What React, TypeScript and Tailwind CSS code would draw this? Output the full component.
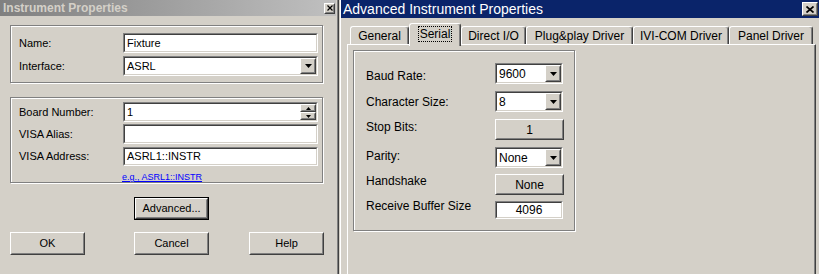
import React from "react";

type P = { className?: string; inner?: string; children?: React.ReactNode };

function Raised({ className = "", inner = "", children }: P) {
  return (
    <div className={`border border-t-white border-l-white border-r-[#404040] border-b-[#404040] bg-[#d4d0c8] ${className}`}>
      <div className={`w-full h-full border border-t-[#d4d0c8] border-l-[#d4d0c8] border-r-[#808080] border-b-[#808080] flex items-center justify-center ${inner}`}>
        {children}
      </div>
    </div>
  );
}

function Sunken({ className = "", inner = "", children }: P) {
  return (
    <div className={`border border-t-[#808080] border-l-[#808080] border-r-white border-b-white ${className}`}>
      <div className={`w-full h-full border border-t-[#404040] border-l-[#404040] border-r-[#d4d0c8] border-b-[#d4d0c8] bg-white flex items-center ${inner}`}>
        {children}
      </div>
    </div>
  );
}

function DownArrow() {
  return (
    <svg width="7" height="4" viewBox="0 0 7 4">
      <path d="M0 0H7L3.5 4Z" fill="#000" />
    </svg>
  );
}

function TinyArrow({ up }: { up?: boolean }) {
  return (
    <svg width="5" height="3" viewBox="0 0 5 3">
      <path d={up ? "M0 3H5L2.5 0Z" : "M0 0H5L2.5 3Z"} fill="#000" />
    </svg>
  );
}

function XIcon({ big }: { big?: boolean }) {
  return big ? (
    <svg width="8" height="7" viewBox="0 0 8 7">
      <path d="M0.5 0.5L7.5 6.5M7.5 0.5L0.5 6.5" stroke="#000" strokeWidth="1.7" />
    </svg>
  ) : (
    <svg width="6" height="6" viewBox="0 0 6 6">
      <path d="M0.5 0.5L5.5 5.5M5.5 0.5L0.5 5.5" stroke="#000" strokeWidth="1.2" />
    </svg>
  );
}

function Combo({ value, className = "", text = "" }: { value: string; className?: string; text?: string }) {
  return (
    <Sunken className={className}>
      <span className={`flex-1 pl-[2px] ${text}`}>{value}</span>
      <Raised className="w-[16px] h-full flex-none">
        <DownArrow />
      </Raised>
    </Sunken>
  );
}

function LeftRow({ label, children, className = "h-[20px]" }: { label: string; children: React.ReactNode; className?: string }) {
  return (
    <div className={`flex items-center ${className}`}>
      <span className="w-[104px] leading-[13px]">{label}</span>
      {children}
    </div>
  );
}

const tabs = [
  { label: "General", cls: "w-[59px] h-[18px]", sel: false },
  { label: "Serial", cls: "w-[52px] h-[23px] -mb-[2px] relative z-10 pb-[2px]", sel: true },
  { label: "Direct I/O", cls: "w-[65px] h-[18px]", sel: false },
  { label: "Plug&play Driver", cls: "w-[107px] h-[18px]", sel: false },
  { label: "IVI-COM Driver", cls: "w-[96px] h-[18px]", sel: false },
  { label: "Panel Driver", cls: "w-[84px] h-[18px]", sel: false },
];

export default function App() {
  return (
    <div className="w-[819px] h-[274px] overflow-hidden flex bg-[#d4d0c8] text-black font-['Liberation_Sans',Arial,sans-serif]">
      {/* Left window */}
      <div className="w-[339px] h-[274px] flex-none border-r border-r-[#404040]">
        <div className="h-full border-r border-r-[#808080] pr-[1px] flex flex-col text-[11px]">
          <div className="h-[16px] flex-none bg-linear-to-r from-[#808080] to-[#c0c0c0] flex items-center justify-between">
            <span className="pl-[3px] text-[12px] font-bold text-[#d4d0c8] leading-[14px]">Instrument Properties</span>
            <Raised className="w-[11px] h-[11px] mr-[1px]">
              <XIcon />
            </Raised>
          </div>

          <div className="mt-[9px] ml-[10px] w-[313px] h-[58px] flex-none border border-[#808080] shadow-[inset_1px_1px_0_#fff,1px_1px_0_#fff] pt-[7px] pl-[8px] flex flex-col gap-[3px]">
            <LeftRow label="Name:">
              <Sunken className="w-[195px] h-[20px]">
                <span className="pl-[2px] leading-[13px]">Fixture</span>
              </Sunken>
            </LeftRow>
            <LeftRow label="Interface:">
              <Combo value="ASRL" className="w-[195px] h-[20px]" />
            </LeftRow>
          </div>

          <div className="mt-[14px] ml-[10px] w-[313px] h-[86px] flex-none border border-[#808080] shadow-[inset_1px_1px_0_#fff,1px_1px_0_#fff] pt-[4px] pl-[8px] flex flex-col gap-[2px]">
            <LeftRow label="Board Number:">
              <Sunken className="w-[195px] h-[20px]">
                <span className="flex-1 pl-[2px] leading-[13px]">1</span>
                <div className="flex flex-col w-[16px] h-full flex-none">
                  <Raised className="w-full h-[8px]">
                    <TinyArrow up />
                  </Raised>
                  <Raised className="w-full h-[8px]">
                    <TinyArrow />
                  </Raised>
                </div>
              </Sunken>
            </LeftRow>
            <LeftRow label="VISA Alias:">
              <Sunken className="w-[195px] h-[20px]" />
            </LeftRow>
            <LeftRow label="VISA Address:" className="h-[19px] mt-[1px]">
              <Sunken className="w-[195px] h-[19px]">
                <span className="pl-[2px] leading-[13px]">ASRL1::INSTR</span>
              </Sunken>
            </LeftRow>
            <a className="mt-[4px] ml-[103px] text-[9px] leading-[11px] text-[#0000ff] underline">e.g., ASRL1::INSTR</a>
          </div>

          <div className="mt-[14px] ml-[134px] w-[75px] h-[23px] flex-none border border-black">
            <Raised className="w-full h-full">Advanced...</Raised>
          </div>

          <div className="mt-[12px] flex h-[23px] flex-none">
            <Raised className="ml-[10px] w-[75px] h-[23px]">OK</Raised>
            <Raised className="ml-[49px] w-[75px] h-[23px]">Cancel</Raised>
            <Raised className="ml-[40px] w-[75px] h-[23px]">Help</Raised>
          </div>
        </div>
      </div>

      {/* Right window */}
      <div className="flex-1 h-[274px] border-l border-l-[#d4d0c8] flex">
        <div className="flex-1 border-l border-l-white flex flex-col">
          <div className="h-[18px] flex-none bg-[#0a246a] flex items-center justify-between">
            <span className="pl-[2px] text-white text-[14px] leading-[16px]">Advanced Instrument Properties</span>
            <Raised className="w-[16px] h-[14px] mr-[1px]">
              <XIcon big />
            </Raised>
          </div>

          <div className="flex items-end h-[21px] mt-[5px] ml-[9px] flex-none text-[12px]">
            {tabs.map((t) => (
              <div
                key={t.label}
                className={`${t.cls} flex items-center justify-center bg-[#d4d0c8] border-t border-l border-r border-t-white border-l-white border-r-[#404040] rounded-t-[3px] shadow-[inset_-1px_0_0_#808080]`}
              >
                {t.sel ? (
                  <span className="border border-dotted border-black px-[1px] leading-[14px]">{t.label}</span>
                ) : (
                  <span className="leading-[14px]">{t.label}</span>
                )}
              </div>
            ))}
          </div>

          <div className="ml-[6px] w-[469px] flex-1 border-t border-l border-r border-t-white border-l-white border-r-[#404040] shadow-[inset_-1px_0_0_#808080] bg-[#d4d0c8]">
            <div className="mt-[5px] ml-[5px] w-[222px] h-[181px] border border-[#808080] shadow-[inset_1px_1px_0_#fff,1px_1px_0_#fff] flex text-[12px]">
              <div className="w-[141px] pl-[12px] flex flex-col leading-[14px]">
                <span className="mt-[18px]">Baud Rate:</span>
                <span className="mt-[12px]">Character Size:</span>
                <span className="mt-[11px]">Stop Bits:</span>
                <span className="mt-[15px]">Parity:</span>
                <span className="mt-[11px]">Handshake</span>
                <span className="mt-[11px]">Receive Buffer Size</span>
              </div>
              <div className="flex flex-col leading-[14px]">
                <Combo value="9600" className="mt-[12px] w-[68px] h-[21px]" />
                <Combo value="8" className="mt-[7px] w-[68px] h-[21px]" />
                <Raised className="mt-[7px] w-[69px] h-[21px]">1</Raised>
                <Combo value="None" className="mt-[7px] w-[68px] h-[21px]" />
                <Raised className="mt-[6px] w-[69px] h-[21px]">None</Raised>
                <Sunken className="mt-[6px] w-[68px] h-[18px]" inner="justify-center">
                  <span>4096</span>
                </Sunken>
              </div>
            </div>
          </div>
        </div>
      </div>
    </div>
  );
}
